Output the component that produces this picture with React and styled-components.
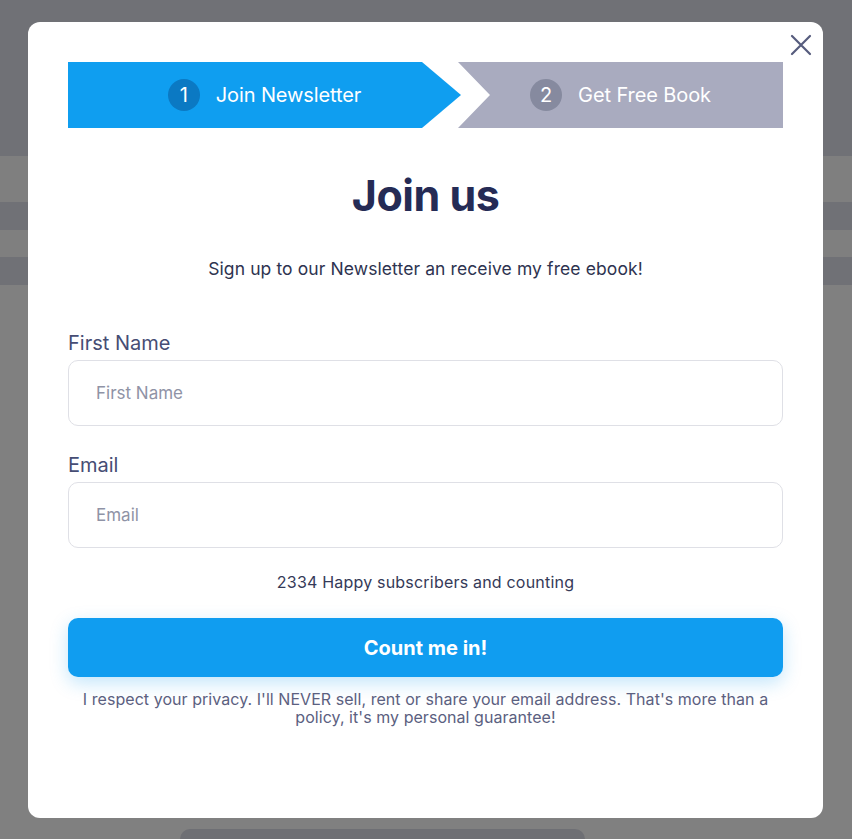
import React from "react";
import styled, { createGlobalStyle } from "styled-components";

const Global = createGlobalStyle`
  html, body { margin: 0; padding: 0; }
  body {
    background: #808080;
    font-family: "Inter", "Noto Sans", sans-serif;
    overflow: hidden;
  }
`;

const Backdrop = styled.div`
  display: flex;
  flex-direction: column;
  width: 852px;
  height: 839px;
  background: #808080;
`;

const Band = styled.div`
  height: ${(p) => p.h}px;
  background: ${(p) => (p.dark ? "#707176" : "#7f7f7f")};
`;

const Spacer = styled.div`
  flex: 1;
`;

const BottomCard = styled.div`
  margin-left: 180px;
  width: 405px;
  height: 10px;
  border-radius: 10px 10px 0 0;
  background: #6e6f74;
`;

const Modal = styled.div`
  position: fixed;
  left: 28px;
  top: 22px;
  width: 795px;
  height: 796px;
  box-sizing: border-box;
  background: #ffffff;
  border-radius: 12px;
  padding: 40px 40px 0;
  display: flex;
  flex-direction: column;
`;

const Close = styled.button`
  position: absolute;
  right: 10px;
  top: 11px;
  width: 24px;
  height: 24px;
  padding: 0;
  border: none;
  background: none;
  cursor: pointer;
  display: flex;
  align-items: center;
  justify-content: center;
`;

const Steps = styled.div`
  display: flex;
  height: 66px;
`;

const Step = styled.div`
  width: ${(p) => p.w}px;
  flex: none;
  display: flex;
  align-items: center;
  justify-content: center;
  gap: 16px;
  background: ${(p) => (p.active ? "#0f9ef0" : "#a9abbf")};
  clip-path: ${(p) =>
    p.first
      ? "polygon(0 0, calc(100% - 39px) 0, 100% 50%, calc(100% - 39px) 100%, 0 100%)"
      : "polygon(0 0, 100% 0, 100% 100%, 0 100%, 32px 50%)"};
  margin-left: ${(p) => (p.first ? 0 : -3)}px;
  color: #ffffff;
  font-size: 20px;
  letter-spacing: -0.1px;
`;

const StepNum = styled.span`
  width: 32px;
  height: 32px;
  border-radius: 50%;
  background: ${(p) => (p.active ? "#0b79c3" : "#868a9f")};
  display: flex;
  align-items: center;
  justify-content: center;
  font-size: 20px;
`;

const Title = styled.h1`
  margin: 42px 0 0;
  text-align: center;
  font-size: 43px;
  font-weight: 700;
  color: #252b55;
  line-height: 50px;
  letter-spacing: -0.5px;
`;

const Subtitle = styled.p`
  margin: 37px 0 0;
  text-align: center;
  font-size: 17.5px;
  color: #2e3350;
  line-height: 24px;
  letter-spacing: 0.1px;
`;

const Field = styled.div`
  display: flex;
  flex-direction: column;
  margin-top: ${(p) => p.mt}px;
`;

const Label = styled.label`
  font-size: 20px;
  color: #464d74;
  line-height: 26px;
  margin-bottom: 4px;
`;

const Input = styled.input`
  box-sizing: border-box;
  height: 66px;
  border: 1.5px solid #dfe0e6;
  border-radius: 10px;
  padding: 0 27px;
  font-family: inherit;
  font-size: 17px;
  color: #2e3350;
  outline: none;
  &::placeholder {
    color: #8f93a6;
  }
`;

const Counter = styled.p`
  margin: 23px 0 0;
  text-align: center;
  font-size: 16px;
  color: #353a58;
  line-height: 22px;
  letter-spacing: 0.2px;
`;

const Submit = styled.button`
  margin-top: 25px;
  height: 59px;
  border: none;
  border-radius: 10px;
  background: #109df0;
  color: #ffffff;
  font-family: inherit;
  font-size: 20px;
  font-weight: 700;
  box-shadow: 0 6px 18px rgba(16, 157, 240, 0.25);
  cursor: pointer;
`;

const Privacy = styled.p`
  margin: 13px 0 0;
  text-align: center;
  font-size: 16px;
  color: #5b6080;
  line-height: 18px;
  padding: 0 6px;
  letter-spacing: 0.05px;
`;

export default function App() {
  return (
    <>
      <Global />
      <Backdrop>
        <Band dark h={156} />
        <Band h={46} />
        <Band dark h={28} />
        <Band h={27} />
        <Band dark h={28} />
        <Spacer />
        <BottomCard />
      </Backdrop>
      <Modal>
        <Close aria-label="Close">
          <svg width="22" height="22" viewBox="0 0 22 22">
            <path d="M2 2 L20 20 M20 2 L2 20" stroke="#565c7d" strokeWidth="2.2" strokeLinecap="round" />
          </svg>
        </Close>
        <Steps>
          <Step first active w={393}>
            <StepNum active>1</StepNum>
            <span>Join Newsletter</span>
          </Step>
          <Step w={325}>
            <StepNum>2</StepNum>
            <span>Get Free Book</span>
          </Step>
        </Steps>
        <Title>Join us</Title>
        <Subtitle>Sign up to our Newsletter an receive my free ebook!</Subtitle>
        <Field mt={49}>
          <Label>First Name</Label>
          <Input placeholder="First Name" />
        </Field>
        <Field mt={26}>
          <Label>Email</Label>
          <Input placeholder="Email" />
        </Field>
        <Counter>2334 Happy subscribers and counting</Counter>
        <Submit>Count me in!</Submit>
        <Privacy>
          I respect your privacy. I'll NEVER sell, rent or share your email address. That's more than a policy, it's my personal guarantee!
        </Privacy>
      </Modal>
    </>
  );
}
